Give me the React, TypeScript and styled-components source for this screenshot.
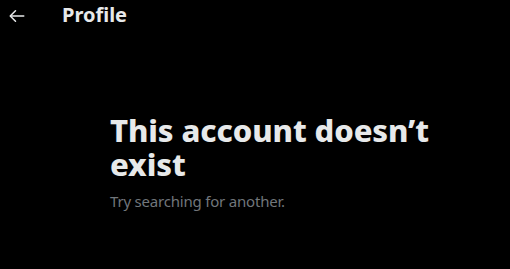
import React from "react";
import styled, { createGlobalStyle } from "styled-components";

const Global = createGlobalStyle`
  html, body { margin: 0; padding: 0; background: #000; }
  body { font-family: "Noto Sans", "Open Sans", sans-serif; color: #e7e9ea; }
`;

const Page = styled.div`
  width: 510px;
  height: 269px;
  background: #000;
  display: flex;
  flex-direction: column;
`;

const Header = styled.header`
  height: 32px;
  display: flex;
  align-items: center;
  padding: 0 7px;
`;

const BackButton = styled.button`
  width: 20px;
  height: 20px;
  padding: 0;
  border: none;
  background: transparent;
  color: #e7e9ea;
  display: flex;
  align-items: center;
  justify-content: center;
  margin-right: 35px;
  margin-top: -1px;
`;

const HeaderTitle = styled.h2`
  margin: 0;
  font-size: 20px;
  font-weight: 700;
  line-height: 24px;
  margin-top: -2px;
`;

const Empty = styled.section`
  padding: 81px 0 0 110px;
  display: flex;
  flex-direction: column;
  gap: 10px;
`;

const Title = styled.h1`
  margin: 0;
  font-size: 31px;
  line-height: 34px;
  font-weight: 800;
  max-width: 330px;
  letter-spacing: -0.1px;
  color: #e7e9ea;
`;

const Subtitle = styled.p`
  margin: 0;
  font-size: 15px;
  line-height: 20px;
  letter-spacing: -0.2px;
  color: #71767b;
`;

export default function App() {
  return (
    <Page>
      <Global />
      <Header>
        <BackButton aria-label="Back">
          <svg width="18" height="18" viewBox="0 0 24 24" fill="none" stroke="currentColor" strokeWidth="2" strokeLinecap="round" strokeLinejoin="round">
            <path d="M21 12H3.5" />
            <path d="M10 5l-7 7 7 7" />
          </svg>
        </BackButton>
        <HeaderTitle>Profile</HeaderTitle>
      </Header>
      <Empty>
        <Title>This account doesn’t exist</Title>
        <Subtitle>Try searching for another.</Subtitle>
      </Empty>
    </Page>
  );
}
